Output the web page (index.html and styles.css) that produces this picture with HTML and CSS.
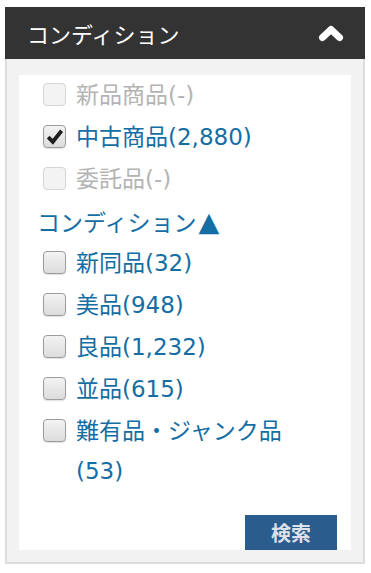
FILE: index.html
```html
<!DOCTYPE html>
<html lang="ja">
<head>
<meta charset="utf-8">
<title>コンディション</title>
<link rel="stylesheet" href="styles.css">
</head>
<body>
<div class="widget">
  <div class="widget-head">
    <span class="widget-title">コンディション</span>
    <svg class="toggle" width="26" height="17" viewBox="0 0 26 17" aria-hidden="true">
      <path d="M4.5 12.5 L13 4.5 L21.5 12.5" fill="none" stroke="#fff" stroke-width="7" stroke-linecap="round" stroke-linejoin="round"/>
    </svg>
  </div>
  <div class="widget-body">
    <div class="box">
      <ul class="options">
        <li class="opt disabled"><span class="cb"></span><span class="label">新品商品(-)</span></li>
        <li class="opt"><span class="cb checked"><svg width="20" height="20" viewBox="0 0 20 20"><polyline points="3.2,10.2 7.8,14.8 16.6,3.8" fill="none" stroke="#1e1e1e" stroke-width="3.8"/></svg></span><span class="label">中古商品(2,880)</span></li>
        <li class="opt disabled"><span class="cb"></span><span class="label">委託品(-)</span></li>
        <li class="heading">コンディション<span class="tri">▲</span></li>
        <li class="opt"><span class="cb"></span><span class="label">新同品(32)</span></li>
        <li class="opt"><span class="cb"></span><span class="label">美品(948)</span></li>
        <li class="opt"><span class="cb"></span><span class="label">良品(1,232)</span></li>
        <li class="opt"><span class="cb"></span><span class="label">並品(615)</span></li>
        <li class="opt"><span class="cb"></span><span class="label">難有品・ジャンク品(53)</span></li>
      </ul>
      <div class="actions"><button class="search-btn" type="button">検索</button></div>
    </div>
  </div>
</div>
</body>
</html>
```

FILE: styles.css
```css
html, body {
  background: #ffffff;
}
body {
  margin: 7px 6px 0 5px;
  font-family: "DejaVu Sans", "Noto Sans CJK JP", sans-serif;
}
.widget {
  width: 360px;
}
.widget-head {
  height: 52px;
  background: #333333;
  display: flex;
  align-items: center;
  justify-content: space-between;
  padding: 0 21px 0 22px;
  box-sizing: border-box;
}
.widget-title {
  color: #ffffff;
  font-family: "Noto Sans CJK JP", sans-serif;
  font-size: 22px;
  line-height: 1;
}
.toggle {
  display: block;
}
.widget-body {
  background: #f2f2f2;
  border: 2px solid #dddddd;
  border-top: 0;
  padding: 16px 12px 12px;
}
.box {
  background: #ffffff;
  display: flex;
  flex-direction: column;
}
.options {
  list-style: none;
  margin: 0;
  padding: 0;
}
.opt {
  display: flex;
  align-items: flex-start;
  padding-left: 24px;
  margin-bottom: 2px;
  font-size: 23px;
  line-height: 40px;
  color: #156ea3;
}
.opt.disabled {
  color: #b4b4b4;
}
.cb {
  flex: none;
  width: 23px;
  height: 23px;
  box-sizing: border-box;
  margin: 8px 10px 0 0;
  border: 1.5px solid #9c9c9c;
  border-radius: 4px;
  background: linear-gradient(#f3f3f3, #dcdcdc);
  box-shadow: 0 1px 1px rgba(0, 0, 0, 0.12);
  display: flex;
  align-items: center;
  justify-content: center;
}
.cb svg {
  display: block;
}
.disabled .cb {
  border-color: #d6d6d6;
  background: #f3f3f3;
  box-shadow: none;
}
.label {
  max-width: 222px;
}
.heading {
  height: 40px;
  padding-left: 18px;
  margin-bottom: 2px;
  font-family: "Noto Sans CJK JP", sans-serif;
  font-size: 23px;
  line-height: 40px;
  color: #156ea3;
}
.tri {
  font-family: "DejaVu Sans", sans-serif;
  font-size: 27px;
  line-height: 0;
  margin-left: 2px;
}
.actions {
  display: flex;
  justify-content: flex-end;
  padding: 22px 14px 0 0;
}
.search-btn {
  width: 92px;
  height: 35px;
  border: 0;
  border-radius: 0;
  padding: 0;
  background: #2b5c8e;
  color: #dde2ea;
  font-family: "Noto Sans CJK JP", sans-serif;
  font-size: 20px;
  font-weight: 700;
  line-height: 35px;
  cursor: pointer;
}
```
